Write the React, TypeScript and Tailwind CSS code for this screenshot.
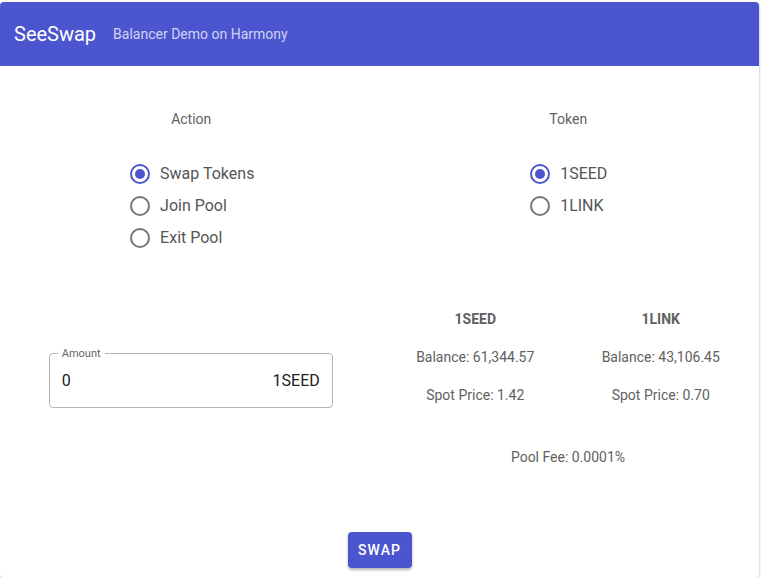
import React from "react";

const font = { fontFamily: "Roboto, 'Liberation Sans', sans-serif" };

function Radio({ checked, label }: { checked: boolean; label: string }) {
  return (
    <div className="flex items-center h-8">
      <span
        className={
          "w-5 h-5 rounded-full border-2 flex items-center justify-center " +
          (checked ? "border-[#4b55d0]" : "border-[#757575]")
        }
      >
        {checked && <span className="w-[10px] h-[10px] rounded-full bg-[#4b55d0]" />}
      </span>
      <span className="ml-[10px] text-[16px] text-[#555555]">{label}</span>
    </div>
  );
}

export default function App() {
  return (
    <div className="pt-[2px] w-[761px] bg-white" style={font}>
      <div className="rounded-[4px] bg-white shadow-[0_1px_3px_rgba(0,0,0,0.3)] w-[759px] overflow-hidden">
        <div className="h-16 bg-[#4b55d0] flex items-center px-[14px]">
          <span className="text-[20px] text-white">SeeSwap</span>
          <span className="ml-[17px] text-[14px] text-white/75">Balancer Demo on Harmony</span>
        </div>
        <div className="pt-[43px] pb-[10px]">
          <div className="grid grid-cols-2">
            <div className="flex flex-col items-center">
              <div className="text-[14px] leading-5 text-[#5f5f5f] pl-[3px]">Action</div>
              <div className="mt-[29px] pl-[5px]">
                <Radio checked label="Swap Tokens" />
                <Radio checked={false} label="Join Pool" />
                <Radio checked={false} label="Exit Pool" />
              </div>
            </div>
            <div className="flex flex-col items-center">
              <div className="text-[14px] leading-5 text-[#5f5f5f] pr-[2px]">Token</div>
              <div className="mt-[29px] pr-[1px]">
                <Radio checked label="1SEED" />
                <Radio checked={false} label="1LINK" />
              </div>
            </div>
          </div>
          <div className="grid grid-cols-2 mt-[55px]">
            <div className="flex justify-center pl-[2px]">
              <div className="relative mt-[44px] w-[284px] h-[55px] border border-[#b5b5b5] rounded-[4px] flex items-center justify-between px-[12px]">
                <span className="absolute -top-[8px] left-[8px] px-[4px] bg-white text-[11px] leading-4 text-[#666666]">
                  Amount
                </span>
                <span className="text-[16px] text-[#222222]">0</span>
                <span className="text-[16px] text-[#222222]">1SEED</span>
              </div>
            </div>
            <div className="pl-[3px] w-[374px]">
              <div className="grid grid-cols-2 text-[14px] leading-5 text-[#616161] text-center">
                <div className="font-bold">1SEED</div>
                <div className="font-bold">1LINK</div>
                <div className="mt-[18px]">Balance: 61,344.57</div>
                <div className="mt-[18px]">Balance: 43,106.45</div>
                <div className="mt-[18px]">Spot Price: 1.42</div>
                <div className="mt-[18px]">Spot Price: 0.70</div>
              </div>
              <div className="mt-[42px] text-center text-[14px] leading-5 text-[#616161]">
                Pool Fee: 0.0001%
              </div>
            </div>
          </div>
          <div className="flex justify-center mt-[65px]">
            <button className="w-16 h-9 rounded-[4px] bg-[#4b55d0] text-white text-[14px] font-medium tracking-[0.08em] shadow-[0_2px_3px_rgba(0,0,0,0.3)]">
              SWAP
            </button>
          </div>
        </div>
      </div>
    </div>
  );
}
